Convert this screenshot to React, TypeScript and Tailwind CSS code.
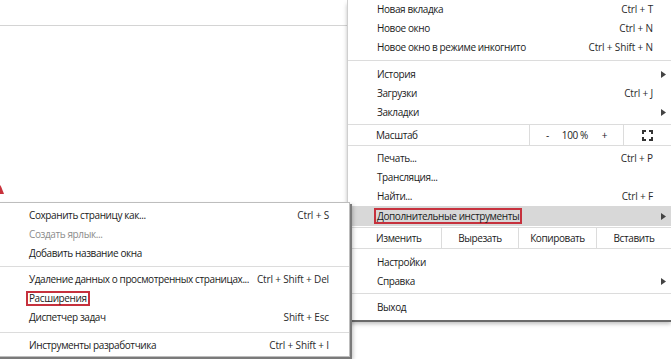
import React from "react";

interface Item {
  label: string
  shortcut?: string
  arrow?: boolean
  muted?: boolean
}

const Arrow = () => (
  <svg width="5" height="7" viewBox="0 0 5 7" className="-mr-[13px] ml-2 fill-[#444]">
    <path d="M0 0 L5 3.5 L0 7 Z" />
  </svg>
)

const Row: React.FC<{ item: Item; pad: string }> = ({ item, pad }) => (
  <div className={`flex h-[19px] items-center justify-between whitespace-nowrap ${pad}`}>
    <span className={item.muted ? "text-[#8c8c8c]" : "text-[#1b1b1b]"}>{item.label}</span>
    {item.shortcut && <span className="tracking-[-0.15px] text-[#2b2b2b]">{item.shortcut}</span>}
    {item.arrow && <Arrow />}
  </div>
)

const Sep: React.FC<{ cls: string }> = ({ cls }) => <div className={`h-px bg-[#dcdcdc] ${cls}`} />

const FullscreenIcon = () => (
  <svg width="11" height="11" viewBox="0 0 11 11" fill="none" stroke="#333" strokeWidth="2">
    <path d="M1 4V1h3M7 1h3v3M10 7v3H7M4 10H1V7" />
  </svg>
)

export default function App() {
  const pad = "pl-[29px] pr-[18px]"
  const subPad = "pl-[28px] pr-[20px]"

  return (
    <div className="relative h-[359px] w-[671px] overflow-hidden bg-white text-[10px] tracking-[-0.4px] font-['Open_Sans',sans-serif] text-[#1b1b1b]">
      {/* toolbar edge */}
      <div className="mt-[25px] h-px w-[347px] bg-[#d4d4d4]" />

      {/* red pointer, cut off by the left edge */}
      <svg width="7" height="10" viewBox="0 0 7 10" className="absolute left-[-3px] top-[185px]">
        <path d="M3.5 0 L7 9 L0 9 Z" fill="#c8323c" />
      </svg>

      {/* main menu */}
      <div className="absolute left-[347px] right-0 top-0 border-l border-[#cfcfcf] bg-white pb-[3px] shadow-[0_2px_0_#6a6a6a,0_4px_4px_rgba(0,0,0,0.25)]">
        <Row item={{ label: "Новая вкладка", shortcut: "Ctrl + T" }} pad={pad} />
        <Row item={{ label: "Новое окно", shortcut: "Ctrl + N" }} pad={pad} />
        <Row item={{ label: "Новое окно в режиме инкогнито", shortcut: "Ctrl + Shift + N" }} pad={pad} />
        <Sep cls="mt-[3px] mb-[4px]" />
        <Row item={{ label: "История", arrow: true }} pad={pad} />
        <Row item={{ label: "Загрузки", shortcut: "Ctrl + J" }} pad={pad} />
        <Row item={{ label: "Закладки", arrow: true }} pad={pad} />

        <div className="mt-[2px] flex h-[22px] items-stretch border-y border-[#dcdcdc]">
          <div className="flex w-[181px] items-center pl-[28px]">Масштаб</div>
          <div className="flex w-[94px] items-center border-l border-[#dcdcdc]">
            <span className="ml-[16px]">-</span>
            <span className="ml-[13px]">100 %</span>
            <span className="ml-[14px]">+</span>
          </div>
          <div className="flex flex-1 items-center justify-center border-l border-[#dcdcdc]">
            <FullscreenIcon />
          </div>
        </div>

        <div className="mt-[3px]" />
        <Row item={{ label: "Печать...", shortcut: "Ctrl + P" }} pad={pad} />
        <Row item={{ label: "Трансляция..." }} pad={pad} />
        <Row item={{ label: "Найти...", shortcut: "Ctrl + F" }} pad={pad} />

        <div className="flex h-[20px] items-center justify-between whitespace-nowrap bg-[#d8d8d8] pl-[26px] pr-[18px]">
          <span className="border-2 border-[#c6313d] px-px leading-[12px]">Дополнительные инструменты</span>
          <Arrow />
        </div>

        <div className="mt-[1px] flex h-[22px] items-stretch border-y border-[#dcdcdc]">
          <div className="flex w-[93px] items-center pl-[28px]">Изменить</div>
          <div className="flex w-[77px] items-center justify-center border-l border-[#dcdcdc]">Вырезать</div>
          <div className="flex w-[78px] items-center justify-center border-l border-[#dcdcdc]">Копировать</div>
          <div className="flex flex-1 items-center justify-center border-l border-[#dcdcdc]">Вставить</div>
        </div>

        <div className="mt-[4px]" />
        <Row item={{ label: "Настройки" }} pad={pad} />
        <Row item={{ label: "Справка", arrow: true }} pad={pad} />
        <Sep cls="mt-[2px] mb-[4px]" />
        <Row item={{ label: "Выход" }} pad={pad} />
      </div>

      {/* submenu */}
      <div className="absolute left-[-4px] top-[202px] w-[354px] border border-[#bdbdbd] bg-white pl-[4px] pt-[3px] pb-px shadow-[2px_2px_0_#7a7a7a,3px_3px_4px_rgba(0,0,0,0.25)]">
        <Row item={{ label: "Сохранить страницу как...", shortcut: "Ctrl + S" }} pad={subPad} />
        <Row item={{ label: "Создать ярлык...", muted: true }} pad={subPad} />
        <Row item={{ label: "Добавить название окна" }} pad={subPad} />
        <Sep cls="-ml-[4px] mt-[3px] mb-[3px]" />
        <Row item={{ label: "Удаление данных о просмотренных страницах...", shortcut: "Ctrl + Shift + Del" }} pad={subPad} />
        <div className="flex h-[19px] items-center whitespace-nowrap pl-[25px]">
          <span className="border-2 border-[#c6313d] px-px leading-[11px]">Расширения</span>
        </div>
        <Row item={{ label: "Диспетчер задач", shortcut: "Shift + Esc" }} pad={subPad} />
        <Sep cls="-ml-[4px] mt-[5px] mb-[3px]" />
        <Row item={{ label: "Инструменты разработчика", shortcut: "Ctrl + Shift + I" }} pad={subPad} />
      </div>
    </div>
  )
}
